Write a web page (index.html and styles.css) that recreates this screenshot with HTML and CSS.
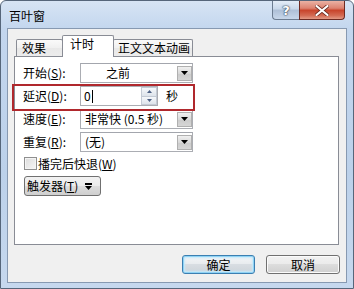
FILE: index.html
```html
<!DOCTYPE html>
<html lang="zh-CN">
<head>
<meta charset="utf-8">
<title>百叶窗</title>
<link rel="stylesheet" href="styles.css">
</head>
<body>
<div class="window">
  <div class="titlebar">
    <span class="title">百叶窗</span>
    <div class="caption">
      <div class="cbtn help"><span>?</span></div>
      <div class="cbtn close">
        <svg width="14" height="11" viewBox="0 0 14 11"><path d="M1.5 1 L12.5 10 M12.5 1 L1.5 10" stroke="#6b2a20" stroke-width="3.6" stroke-linecap="round"/><path d="M1.5 1 L12.5 10 M12.5 1 L1.5 10" stroke="#ffffff" stroke-width="2.2" stroke-linecap="round"/></svg>
      </div>
    </div>
  </div>
  <div class="client">
    <div class="tabs">
      <div class="tab t1">效果</div>
      <div class="tab sel">计时</div>
      <div class="tab t3">正文文本动画</div>
    </div>
    <div class="panel">
      <div class="form">
        <span class="lbl">开始(<u>S</u>):</span>
        <div class="combo"><span class="val start">之前</span><span class="arrow"><svg width="7" height="4" viewBox="0 0 7 4"><polygon points="0,0 7,0 3.5,4" fill="#000"/></svg></span></div>

        <span class="lbl">延迟(<u>D</u>):</span>
        <div class="delay">
          <div class="spin">
            <span class="val num">0</span><span class="caret"></span>
            <span class="spinbtns">
              <span class="sb"><svg width="5" height="3" viewBox="0 0 5 3"><polygon points="0,3 5,3 2.5,0" fill="#4d6185"/></svg></span>
              <span class="sb"><svg width="5" height="3" viewBox="0 0 5 3"><polygon points="0,0 5,0 2.5,3" fill="#4d6185"/></svg></span>
            </span>
          </div>
          <span class="unit">秒</span>
        </div>

        <span class="lbl">速度(<u>E</u>):</span>
        <div class="combo"><span class="val">非常快 (0.5 秒)</span><span class="arrow"><svg width="7" height="4" viewBox="0 0 7 4"><polygon points="0,0 7,0 3.5,4" fill="#000"/></svg></span></div>

        <span class="lbl">重复(<u>R</u>):</span>
        <div class="combo"><span class="val">(无)</span><span class="arrow"><svg width="7" height="4" viewBox="0 0 7 4"><polygon points="0,0 7,0 3.5,4" fill="#000"/></svg></span></div>
      </div>
      <div class="check">
        <span class="box"></span>
        <span>播完后快退(<u>W</u>)</span>
      </div>
      <div class="trigger">
        <span>触发器(<u>T</u>)</span>
        <svg width="7" height="7" viewBox="0 0 7 7"><rect x="0" y="0" width="7" height="2" fill="#000"/><polygon points="0,3 7,3 3.5,7" fill="#000"/></svg>
      </div>
    </div>
    <div class="buttons">
      <div class="btn default">确定</div>
      <div class="btn">取消</div>
    </div>
  </div>
  <div class="highlight"></div>
</div>
</body>
</html>
```

FILE: styles.css
```css
html, body {
  margin: 0;
  padding: 0;
  background: #ffffff;
}

body {
  font-family: "Noto Sans CJK SC", "Liberation Sans", sans-serif;
  font-size: 12px;
  color: #000;
}

u {
  text-decoration: underline;
  text-underline-offset: 1px;
}

.window {
  position: relative;
  width: 354px;
  height: 289px;
  box-sizing: border-box;
  border: 1px solid #56667a;
  border-radius: 6px 6px 0 0;
  background: linear-gradient(#d7e4f4 0, #c3d6ee 28px, #bcd1ea 60%, #c6d8ee 100%);
  padding: 0 6px 5px 6px;
  display: flex;
  flex-direction: column;
}

.titlebar {
  height: 27px;
  display: flex;
  align-items: flex-start;
}

.title {
  margin: 8px 0 0 2px;
  line-height: 14px;
  font-size: 12px;
}

.caption {
  margin-left: auto;
  margin-right: 2px;
  display: flex;
}

.cbtn {
  height: 19px;
  box-sizing: border-box;
  display: flex;
  align-items: center;
  justify-content: center;
}

.help {
  width: 27px;
  border: 1px solid #6c7c90;
  border-top: none;
  border-right: none;
  border-radius: 0 0 0 4px;
  background: linear-gradient(#e3ecf7 0, #c9d8ea 45%, #aebfd6 50%, #c8d7ea 100%);
}

.help span {
  font-family: "DejaVu Sans", sans-serif;
  font-weight: bold;
  font-size: 13px;
  line-height: 13px;
  color: #fff;
  text-shadow: 0 0 1px #3b4a5e, 0 0 1px #3b4a5e, 0 0 2px #3b4a5e;
}

.close {
  width: 46px;
  border: 1px solid #6e2b22;
  border-top: none;
  border-radius: 0 0 4px 0;
  background: linear-gradient(#eab2a4 0, #dc8270 40%, #c8452c 52%, #d36a52 80%, #e39a86 100%);
}

.client {
  flex: 1;
  border: 1px solid #8799b1;
  background: #f0f0f0;
  padding: 6px 6px 0 6px;
  display: flex;
  flex-direction: column;
}

.tabs {
  display: flex;
  align-items: flex-end;
  height: 22px;
  margin-left: 2px;
  margin-bottom: -1px;
  position: relative;
  z-index: 1;
}

.tab {
  box-sizing: border-box;
  border: 1px solid #898c95;
  border-bottom: none;
  border-radius: 2px 2px 0 0;
  height: 17px;
  margin-bottom: 1px;
  line-height: 15px;
  padding-left: 5px;
  background: linear-gradient(#fafafa, #f0f0f0 50%, #e8e8e8 51%, #ececec);
}

.t1 {
  width: 47px;
}

.sel {
  width: 52px;
  height: 22px;
  margin-bottom: 0;
  margin-left: -1px;
  padding-left: 7px;
  line-height: 14px;
  padding-top: 1px;
  background: #ffffff;
  position: relative;
  z-index: 2;
}

.t3 {
  width: 80px;
  margin-left: -1px;
  padding-left: 4px;
}

.panel {
  width: 325px;
  height: 189px;
  box-sizing: border-box;
  border: 1px solid #898c95;
  background: #ffffff;
  padding: 6px 0 0 8px;
}

.form {
  display: grid;
  grid-template-columns: 57px 113px;
  grid-auto-rows: 20px;
  row-gap: 3px;
  align-items: center;
}

.lbl {
  line-height: 14px;
  white-space: nowrap;
}

.combo {
  height: 20px;
  box-sizing: border-box;
  border: 1px solid #abadb3;
  border-top-color: #a3a6ad;
  background: #fff;
  display: flex;
  align-items: center;
}

.val {
  padding-left: 4px;
  line-height: 14px;
  white-space: nowrap;
}

.val.start {
  padding-left: 25px;
}

.arrow {
  margin-left: auto;
  margin-right: 0;
  width: 15px;
  height: 15px;
  box-sizing: border-box;
  border: 1px solid #b0b0b0;
  background: linear-gradient(#f0f0f0, #d8d8d8 50%, #cbcbcb 51%, #d6d6d6);
  display: flex;
  align-items: center;
  justify-content: center;
}

.delay {
  display: flex;
  align-items: center;
  height: 20px;
}

.spin {
  width: 78px;
  height: 20px;
  box-sizing: border-box;
  border: 1px solid #abadb3;
  background: #fff;
  display: flex;
  align-items: center;
}

.num {
  padding-left: 3px;
}

.caret {
  width: 1px;
  height: 13px;
  background: #000;
  margin-left: 1px;
}

.spinbtns {
  margin-left: auto;
  margin-right: 0;
  width: 16px;
  height: 18px;
  display: flex;
  flex-direction: column;
}

.sb {
  flex: 1;
  box-sizing: border-box;
  border: 1px solid #c3cad4;
  background: linear-gradient(#f6f8fb, #dde3ea);
  display: flex;
  align-items: center;
  justify-content: center;
}

.sb + .sb {
  border-top: none;
}

.unit {
  margin-left: 8px;
  line-height: 14px;
}

.check {
  display: flex;
  align-items: center;
  gap: 1px;
  margin-top: 5px;
  margin-left: 1px;
  height: 13px;
  line-height: 13px;
}

.box {
  width: 13px;
  height: 13px;
  box-sizing: border-box;
  border: 1px solid #8f8f8f;
  background: linear-gradient(135deg, #dcdcdc, #f6f6f6);
  box-shadow: inset 0 0 0 1px #f4f4f4;
}

.trigger {
  margin-top: 6px;
  margin-left: 1px;
  width: 77px;
  height: 20px;
  box-sizing: border-box;
  border: 1px solid #707070;
  border-radius: 3px;
  background: linear-gradient(#f2f2f2, #ebebeb 48%, #dddddd 50%, #cfcfcf);
  display: flex;
  align-items: center;
  padding-left: 2px;
  gap: 7px;
  line-height: 14px;
}

.buttons {
  display: flex;
  justify-content: flex-end;
  gap: 11px;
  margin-top: 10px;
}

.btn {
  width: 74px;
  height: 19px;
  box-sizing: border-box;
  border: 1px solid #707070;
  border-radius: 3px;
  background: linear-gradient(#f2f2f2, #ebebeb 48%, #dddddd 50%, #cfcfcf);
  box-shadow: inset 0 0 0 1px #fbfbfb;
  text-align: center;
  line-height: 17px;
}

.btn.default {
  width: 73px;
  border-color: #3c7fb1;
  background: linear-gradient(#f4f6f8, #e8ebee 48%, #d8dde2 50%, #cdd3d9);
  box-shadow: inset 0 0 0 1px #8fd3f5, inset 0 0 2px 2px #c6e9fa;
}

.highlight {
  position: absolute;
  left: 11px;
  top: 83px;
  width: 183px;
  height: 27px;
  box-sizing: border-box;
  border: 2px solid #b0282d;
}
```
